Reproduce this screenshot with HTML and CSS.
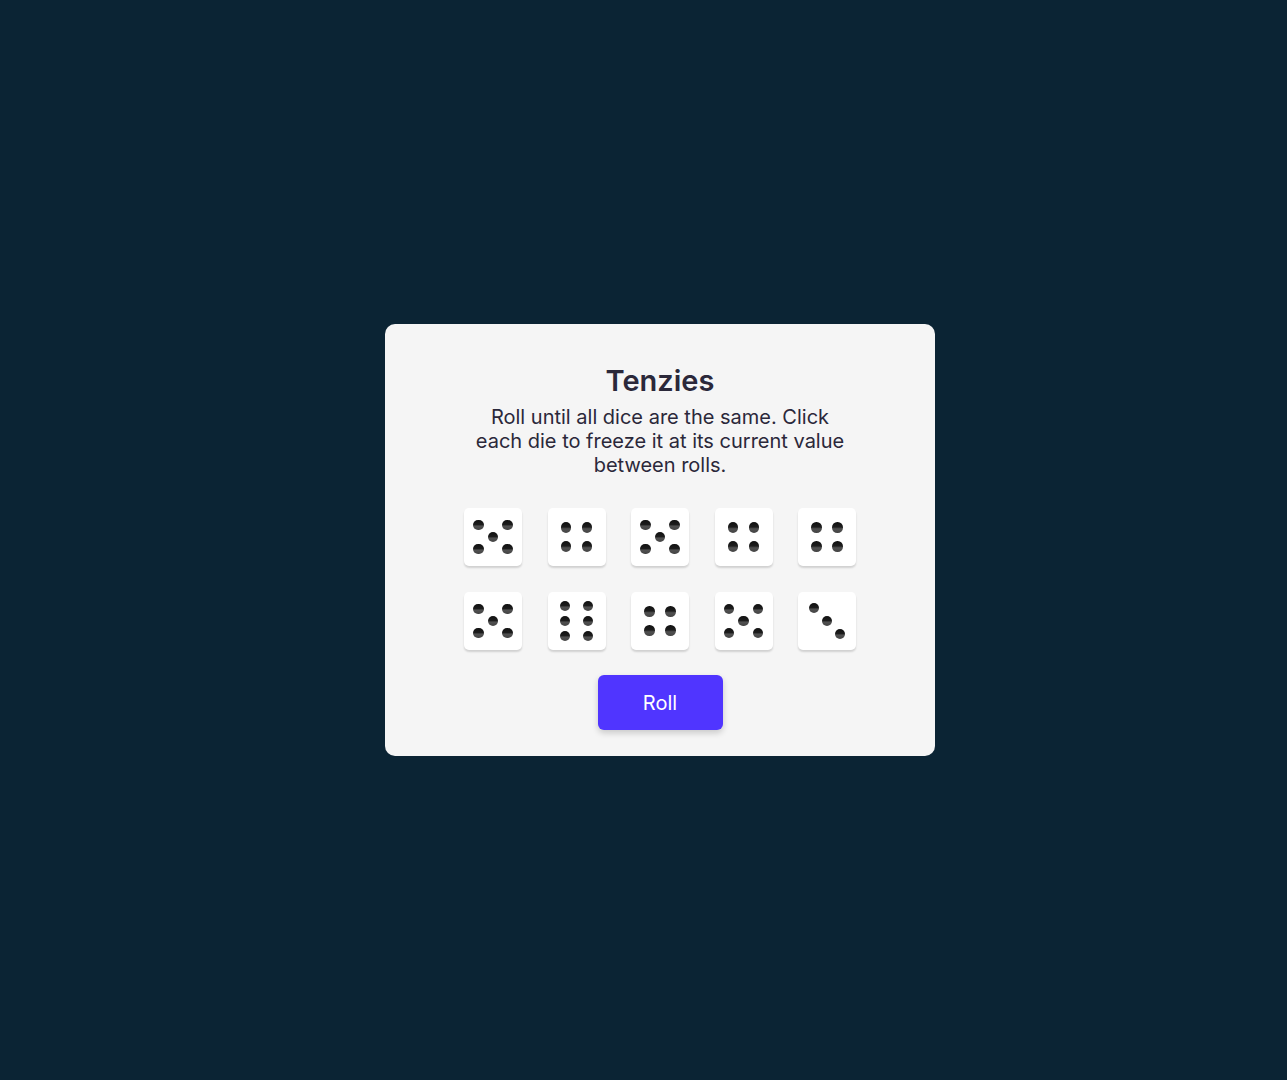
FILE: index.html
```html
<!DOCTYPE html>
<html lang="en">
<head>
<meta charset="utf-8">
<title>Tenzies</title>
<link rel="stylesheet" href="styles.css">
</head>
<body>
<main class="card">
  <h1 class="title">Tenzies</h1>
  <p class="instructions">Roll until all dice are the same. Click each die to freeze it at its current value between rolls.</p>
  <div class="dice">
    <div class="die face-5"><span class="p p-tl"></span><span class="p p-tr"></span><span class="p p-c"></span><span class="p p-bl"></span><span class="p p-br"></span></div>
    <div class="die face-4"><span class="p"></span><span class="p"></span><span class="p"></span><span class="p"></span></div>
    <div class="die face-5"><span class="p p-tl"></span><span class="p p-tr"></span><span class="p p-c"></span><span class="p p-bl"></span><span class="p p-br"></span></div>
    <div class="die face-4"><span class="p"></span><span class="p"></span><span class="p"></span><span class="p"></span></div>
    <div class="die face-4"><span class="p"></span><span class="p"></span><span class="p"></span><span class="p"></span></div>
    <div class="die face-5"><span class="p p-tl"></span><span class="p p-tr"></span><span class="p p-c"></span><span class="p p-bl"></span><span class="p p-br"></span></div>
    <div class="die face-6"><span class="p"></span><span class="p"></span><span class="p"></span><span class="p"></span><span class="p"></span><span class="p"></span></div>
    <div class="die face-4"><span class="p"></span><span class="p"></span><span class="p"></span><span class="p"></span></div>
    <div class="die face-5"><span class="p p-tl"></span><span class="p p-tr"></span><span class="p p-c"></span><span class="p p-bl"></span><span class="p p-br"></span></div>
    <div class="die face-3"><span class="p p-tl"></span><span class="p p-c"></span><span class="p p-br"></span></div>
  </div>
  <button class="roll">Roll</button>
</main>
</body>
</html>
```
FILE: styles.css
```css
html, body {
  margin: 0;
  height: 100%;
}
body {
  background: #0b2434;
  display: flex;
  align-items: center;
  justify-content: center;
  padding-left: 33px;
  box-sizing: border-box;
  font-family: Inter, "Noto Sans", sans-serif;
}
.card {
  width: 550px;
  height: 432px;
  box-sizing: border-box;
  background: #f5f5f5;
  border-radius: 10px;
  display: flex;
  flex-direction: column;
  align-items: center;
  padding-top: 40px;
}
.title {
  margin: 0;
  font-size: 29px;
  font-weight: 600;
  color: #2b283a;
  line-height: 34px;
}
.instructions {
  margin: 7px 0 0;
  width: 378px;
  text-align: center;
  font-size: 20px;
  line-height: 24px;
  font-weight: 400;
  color: #2b283a;
}
.dice {
  margin-top: 31px;
  display: grid;
  grid-template-columns: repeat(5, 58px);
  column-gap: 25.5px;
  row-gap: 26px;
}
.die {
  width: 58px;
  height: 58px;
  background: #fff;
  border-radius: 5px;
  box-shadow: 0 2px 2px rgba(0, 0, 0, 0.15);
  display: grid;
  justify-content: center;
  align-content: center;
}
.p {
  width: 10.5px;
  height: 10.5px;
  border-radius: 50%;
  background: linear-gradient(to bottom, #111 0%, #1c1c1c 45%, #505050 62%, #444 100%);
}
.face-5 {
  grid-template-columns: repeat(3, 10.5px);
  grid-template-rows: repeat(3, 10.5px);
  column-gap: 4.2px;
  row-gap: 1.5px;
}
.face-3 {
  grid-template-columns: repeat(3, 10.5px);
  grid-template-rows: repeat(3, 10.5px);
  gap: 2.5px;
}
.p-tl { grid-area: 1 / 1; }
.p-tr { grid-area: 1 / 3; }
.p-c { grid-area: 2 / 2; }
.p-bl { grid-area: 3 / 1; }
.p-br { grid-area: 3 / 3; }
.face-4 {
  grid-template-columns: repeat(2, 10.5px);
  grid-template-rows: repeat(2, 10.5px);
  column-gap: 10.8px;
  row-gap: 8.5px;
}
.face-6 {
  grid-template-columns: repeat(2, 10.5px);
  grid-template-rows: repeat(3, 10.5px);
  column-gap: 12.2px;
  row-gap: 4.5px;
}
.roll {
  margin-top: 25px;
  width: 125px;
  height: 55px;
  border: none;
  border-radius: 6px;
  background: #5035ff;
  color: #fff;
  font-family: Inter, "Noto Sans", sans-serif;
  font-size: 20px;
  font-weight: 400;
  box-shadow: 0 3px 6px rgba(0, 0, 0, 0.18);
  cursor: pointer;
}
```
